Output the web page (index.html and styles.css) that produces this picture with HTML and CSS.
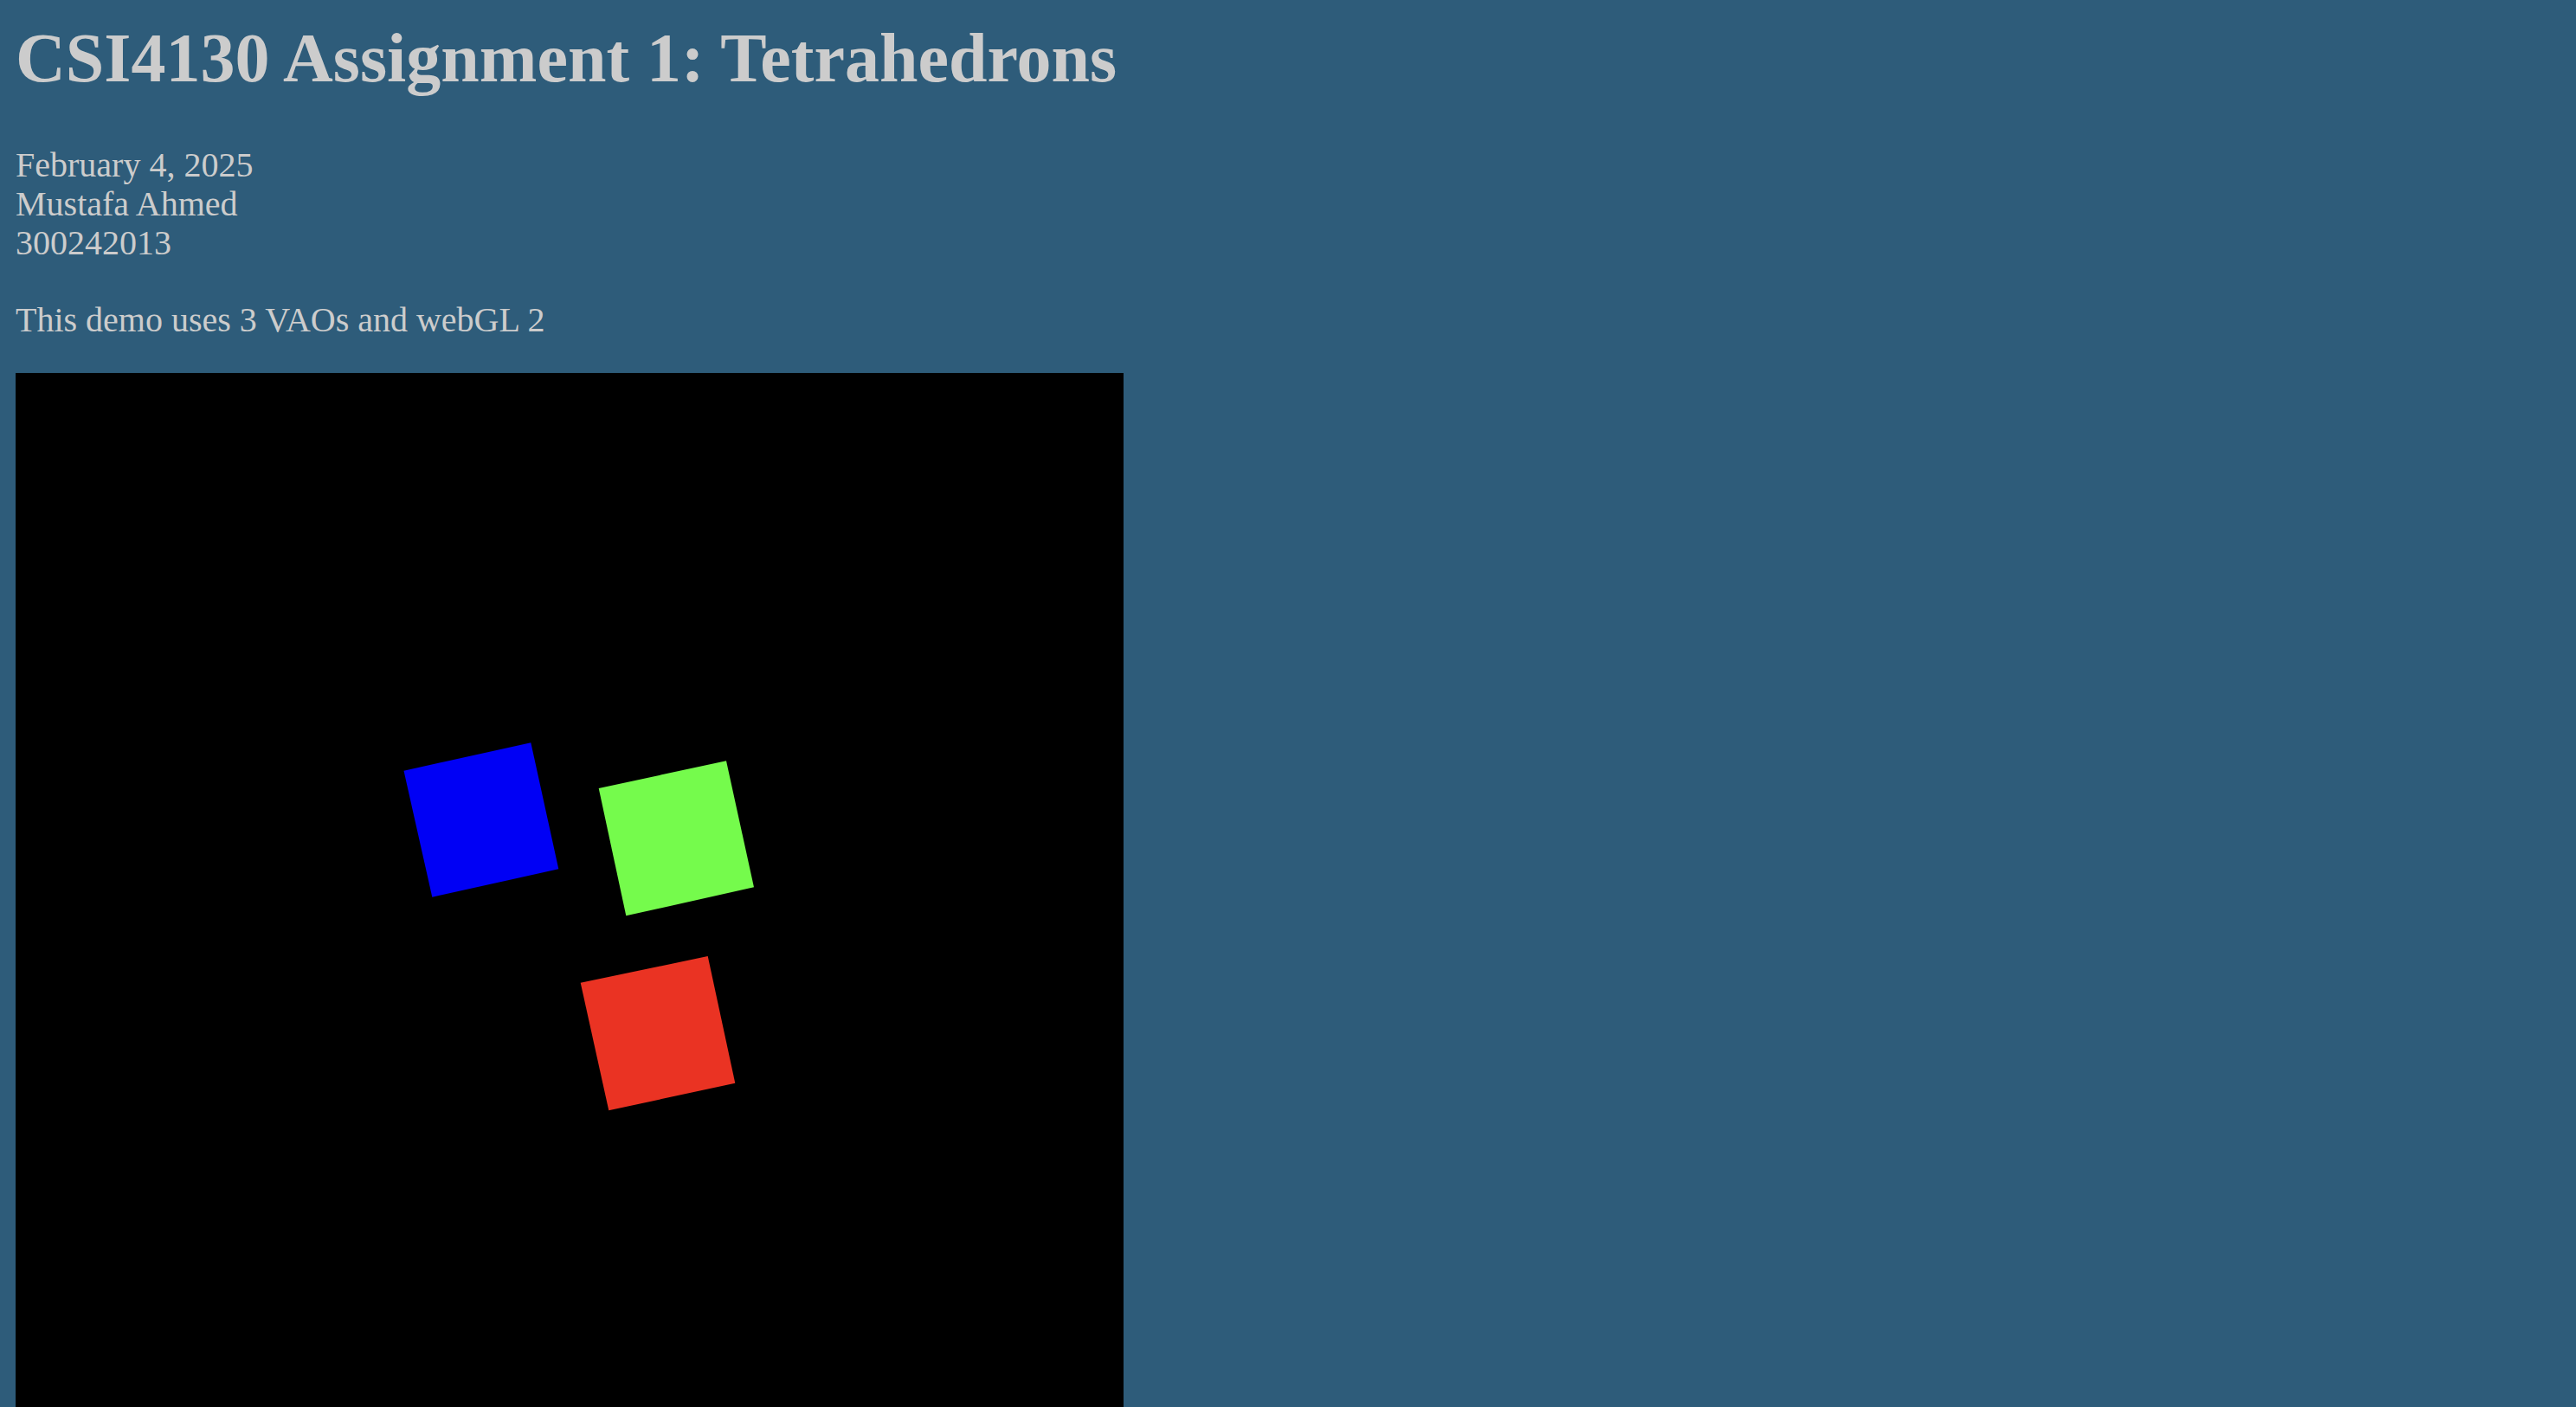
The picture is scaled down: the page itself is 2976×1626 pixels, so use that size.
FILE: index.html
```html
<!DOCTYPE html>
<html lang="en">
<head>
<meta charset="utf-8">
<title>CSI4130 Assignment 1: Tetrahedrons</title>
<link rel="stylesheet" href="styles.css">
</head>
<body>
<h1 class="title">CSI4130 Assignment 1: Tetrahedrons</h1>
<p class="meta">February 4, 2025<br>Mustafa Ahmed<br>300242013</p>
<p class="demo">This demo uses 3 VAOs and webGL 2</p>
<div class="canvas">
<svg class="scene" width="1280" height="1280" viewBox="0 0 1280 1280" xmlns="http://www.w3.org/2000/svg">
<rect width="1280" height="1280" fill="#000"/>
<polygon fill="rgb(0,0,245)" points="448.5,459.7 595.3,427.3 627.3,573.3 481.3,605.7"/>
<polygon fill="rgb(117,251,76)" points="673.7,480 821,448.3 853,594.3 705.3,627.3"/>
<polygon fill="rgb(234,51,35)" points="652.7,704.7 799.7,674 831.3,820.7 685.3,852.3"/>
</svg>
</div>
</body>
</html>
```
FILE: styles.css
```css
html {
  background: #2e5c7a;
}
body {
  margin: 0;
  padding: 21px 18px 0;
  background: #2e5c7a;
  color: #cccccc;
  font-family: "Liberation Serif", "Times New Roman", serif;
}
.title {
  margin: 0 0 55px;
  font-size: 80px;
  font-weight: bold;
  line-height: 92px;
}
.meta {
  margin: 0;
  font-size: 40px;
  line-height: 45.2px;
}
.demo {
  margin: 43px 0 0;
  font-size: 40px;
  line-height: 45.2px;
}
.canvas {
  margin-top: 39px;
  width: 1280px;
  height: 1280px;
  background: #000;
}
.scene {
  display: block;
}
```
